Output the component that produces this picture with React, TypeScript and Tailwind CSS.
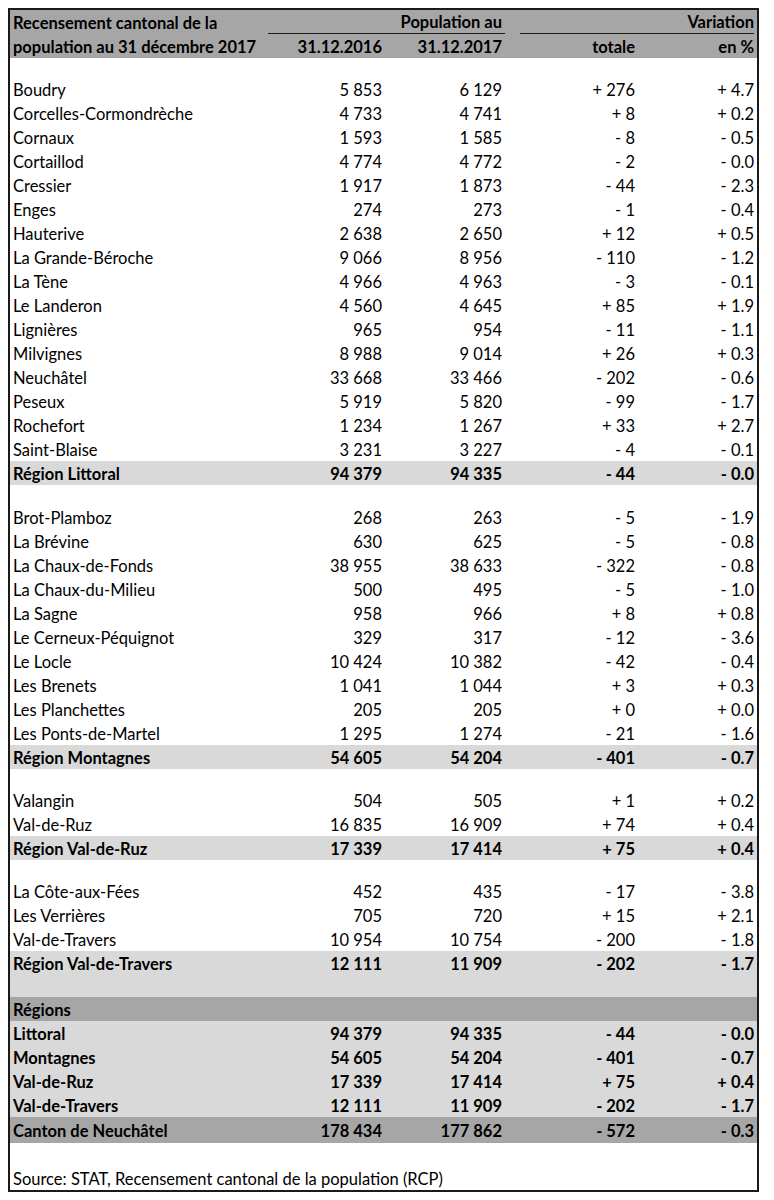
import React from 'react';

type Row = [string, string, string, string, string];

const littoral: Row[] = [
    ['Boudry', '5 853', '6 129', '+ 276', '+ 4.7'],
    ['Corcelles-Cormondrèche', '4 733', '4 741', '+ 8', '+ 0.2'],
    ['Cornaux', '1 593', '1 585', '- 8', '- 0.5'],
    ['Cortaillod', '4 774', '4 772', '- 2', '- 0.0'],
    ['Cressier', '1 917', '1 873', '- 44', '- 2.3'],
    ['Enges', '274', '273', '- 1', '- 0.4'],
    ['Hauterive', '2 638', '2 650', '+ 12', '+ 0.5'],
    ['La Grande-Béroche', '9 066', '8 956', '- 110', '- 1.2'],
    ['La Tène', '4 966', '4 963', '- 3', '- 0.1'],
    ['Le Landeron', '4 560', '4 645', '+ 85', '+ 1.9'],
    ['Lignières', '965', '954', '- 11', '- 1.1'],
    ['Milvignes', '8 988', '9 014', '+ 26', '+ 0.3'],
    ['Neuchâtel', '33 668', '33 466', '- 202', '- 0.6'],
    ['Peseux', '5 919', '5 820', '- 99', '- 1.7'],
    ['Rochefort', '1 234', '1 267', '+ 33', '+ 2.7'],
    ['Saint-Blaise', '3 231', '3 227', '- 4', '- 0.1'],
];

const montagnes: Row[] = [
    ['Brot-Plamboz', '268', '263', '- 5', '- 1.9'],
    ['La Brévine', '630', '625', '- 5', '- 0.8'],
    ['La Chaux-de-Fonds', '38 955', '38 633', '- 322', '- 0.8'],
    ['La Chaux-du-Milieu', '500', '495', '- 5', '- 1.0'],
    ['La Sagne', '958', '966', '+ 8', '+ 0.8'],
    ['Le Cerneux-Péquignot', '329', '317', '- 12', '- 3.6'],
    ['Le Locle', '10 424', '10 382', '- 42', '- 0.4'],
    ['Les Brenets', '1 041', '1 044', '+ 3', '+ 0.3'],
    ['Les Planchettes', '205', '205', '+ 0', '+ 0.0'],
    ['Les Ponts-de-Martel', '1 295', '1 274', '- 21', '- 1.6'],
];

const valDeRuz: Row[] = [
    ['Valangin', '504', '505', '+ 1', '+ 0.2'],
    ['Val-de-Ruz', '16 835', '16 909', '+ 74', '+ 0.4'],
];

const valDeTravers: Row[] = [
    ['La Côte-aux-Fées', '452', '435', '- 17', '- 3.8'],
    ['Les Verrières', '705', '720', '+ 15', '+ 2.1'],
    ['Val-de-Travers', '10 954', '10 754', '- 200', '- 1.8'],
];

const regions: Row[] = [
    ['Littoral', '94 379', '94 335', '- 44', '- 0.0'],
    ['Montagnes', '54 605', '54 204', '- 401', '- 0.7'],
    ['Val-de-Ruz', '17 339', '17 414', '+ 75', '+ 0.4'],
    ['Val-de-Travers', '12 111', '11 909', '- 202', '- 1.7'],
];

const grid = 'grid grid-cols-[258px_117px_120px_133px_119px]';

function DataRow({row, bold = false, bg = '', h = 'h-[24px]'}: { row: Row, bold?: boolean, bg?: string, h?: string }) {
    return (
        <div className={`${grid} ${h} ${bg} ${bold ? 'font-bold' : ''} items-center pt-[2px]`}>
            <div className="pl-[3px] whitespace-nowrap">{row[0]}</div>
            <div className="pr-[3px] text-right">{row[1]}</div>
            <div className="pr-[3px] text-right">{row[2]}</div>
            <div className="pr-[3px] text-right">{row[3]}</div>
            <div className="pr-[3px] text-right">{row[4]}</div>
        </div>
    );
}

function Blank({h = 'h-[19px]', bg = ''}: { h?: string, bg?: string }) {
    return <div className={`${h} ${bg}`}/>;
}

export default function App() {
    return (
        <div className="min-h-[1200px] bg-white pt-2 pl-2 text-black text-[16.5px] leading-none"
             style={{fontFamily: 'Lato, "Open Sans", sans-serif'}}>
            <div className="w-[751px] border-2 border-[#1a1a1a]">
                {/* header */}
                <div className="bg-[#a6a6a6] font-bold">
                    <div className={`${grid} h-[24px] items-center`}>
                        <div className="pl-[3px] pt-[2px] whitespace-nowrap">Recensement cantonal de la</div>
                        <div className="col-span-2 h-full flex items-center justify-end pr-[3px] pt-[2px] border-b border-[#1a1a1a]">
                            Population au
                        </div>
                        <div className="col-span-2 h-full flex items-center justify-end ml-[15px] mr-[3px] pt-[2px] border-b border-[#1a1a1a]">
                            Variation
                        </div>
                    </div>
                    <DataRow row={['population au 31 décembre 2017', '31.12.2016', '31.12.2017', 'totale', 'en %']}/>
                </div>

                <Blank/>
                {littoral.map((r) => <DataRow key={r[0]} row={r}/>)}
                <DataRow row={['Région Littoral', '94 379', '94 335', '- 44', '- 0.0']} bold bg="bg-[#d9d9d9]"/>

                <Blank h="h-[20px]"/>
                {montagnes.map((r) => <DataRow key={r[0]} row={r}/>)}
                <DataRow row={['Région Montagnes', '54 605', '54 204', '- 401', '- 0.7']} bold bg="bg-[#d9d9d9]"/>

                <Blank/>
                {valDeRuz.map((r) => <DataRow key={r[0]} row={r}/>)}
                <DataRow row={['Région Val-de-Ruz', '17 339', '17 414', '+ 75', '+ 0.4']} bold bg="bg-[#d9d9d9]"/>

                <Blank/>
                {valDeTravers.map((r) => <DataRow key={r[0]} row={r}/>)}
                <DataRow row={['Région Val-de-Travers', '12 111', '11 909', '- 202', '- 1.7']} bold bg="bg-[#d9d9d9]"/>
                <Blank h="h-[22px]" bg="bg-[#d9d9d9]"/>

                <div className="h-[24px] bg-[#a6a6a6] font-bold flex items-center pl-[3px] pt-[2px]">Régions</div>
                {regions.map((r) => <DataRow key={r[0]} row={r} bold bg="bg-[#d9d9d9]"/>)}
                <DataRow row={['Canton de Neuchâtel', '178 434', '177 862', '- 572', '- 0.3']} bold
                         bg="bg-[#a6a6a6]" h="h-[26px]"/>

                <Blank h="h-[23px]"/>
                <div className="h-[24px] flex items-center pl-[3px] pt-[2px] whitespace-nowrap">
                    Source: STAT, Recensement cantonal de la population (RCP)
                </div>
            </div>
        </div>
    );
}
